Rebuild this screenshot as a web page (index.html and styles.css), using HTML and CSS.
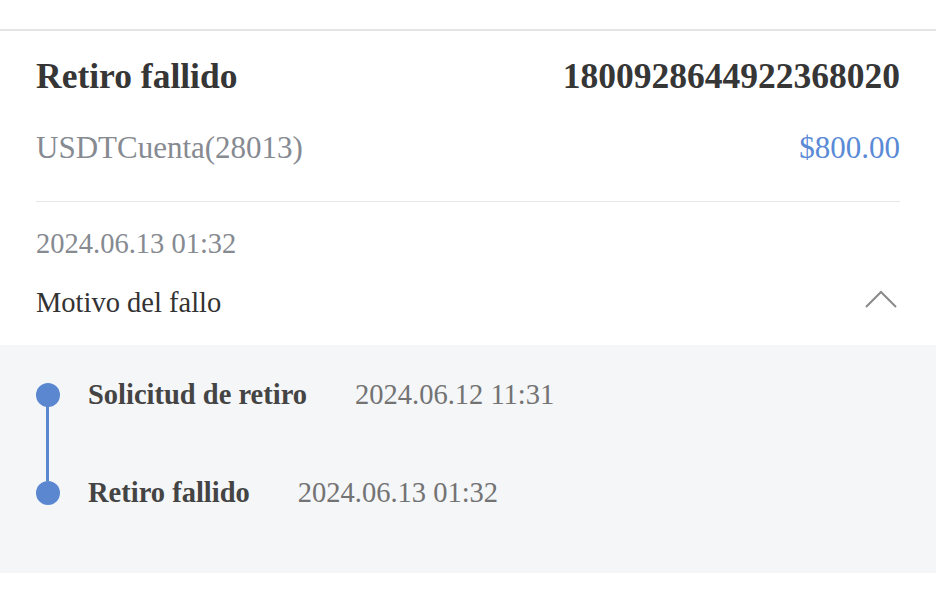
FILE: index.html
```html
<!DOCTYPE html>
<html lang="es">
<head>
    <meta charset="UTF-8">
    <meta name="viewport" content="width=device-width, initial-scale=1.0">
    <title>Retiro fallido</title>
    <link rel="stylesheet" href="styles.css">
</head>
<body>
    <div class="topbar"></div>

    <div class="order">
        <div class="order-head">
            <div class="row title-row">
                <span class="status">Retiro fallido</span>
                <span class="order-no">1800928644922368020</span>
            </div>
            <div class="row account-row">
                <span class="account">USDTCuenta(28013)</span>
                <span class="amount">$800.00</span>
            </div>
        </div>

        <div class="order-body">
            <div class="date">2024.06.13 01:32</div>
            <div class="row reason-row">
                <span class="reason">Motivo del fallo</span>
                <svg class="chevron" width="32" height="18" viewBox="0 0 32 18">
                    <polyline points="1,17 16,2 31,17" fill="none" stroke="#8a8a8a" stroke-width="2"/>
                </svg>
            </div>
        </div>
    </div>

    <div class="timeline">
        <div class="step">
            <span class="dot"></span>
            <span class="step-name">Solicitud de retiro</span>
            <span class="step-time">2024.06.12 11:31</span>
        </div>
        <div class="step">
            <span class="dot"></span>
            <span class="step-name">Retiro fallido</span>
            <span class="step-time">2024.06.13 01:32</span>
        </div>
    </div>
</body>
</html>
```

FILE: styles.css
```css
body {
    font-family: "Liberation Serif", "Times New Roman", serif;
    margin: 0;
    padding: 0;
    background-color: #fff;
    color: #333;
}
.topbar {
    height: 29px;
    border-bottom: 2px solid #e4e4e4;
}
.order {
    padding: 0 36px;
}
.row {
    display: flex;
    justify-content: space-between;
    align-items: center;
}
.order-head {
    padding: 25px 0 33px;
    border-bottom: 1px solid #e6e6e6;
}
.title-row {
    line-height: 40px;
    font-size: 35.5px;
    font-weight: bold;
    color: #363636;
}
.account-row {
    margin-top: 32px;
    line-height: 40px;
    font-size: 31px;
}
.account {
    color: #868a91;
}
.amount {
    color: #5a8ad6;
}
.order-body {
    padding: 22px 0 22px;
}
.date {
    font-size: 28.5px;
    line-height: 40px;
    color: #868a91;
}
.reason-row {
    margin-top: 19px;
    font-size: 28.5px;
    line-height: 40px;
    color: #333;
}
.chevron {
    margin-right: 3px;
    margin-top: -8px;
}
.timeline {
    background-color: #f5f6f8;
    padding: 30px 36px 60px;
}
.step {
    position: relative;
    display: flex;
    align-items: center;
    line-height: 40px;
    font-size: 28.5px;
}
.step + .step {
    margin-top: 58px;
}
.dot {
    width: 24px;
    height: 24px;
    border-radius: 50%;
    background-color: #5a87d0;
    flex-shrink: 0;
}
.step:not(:last-child) .dot::after {
    content: "";
    position: absolute;
    left: 10px;
    top: 30px;
    width: 3px;
    height: 76px;
    background-color: #5a87d0;
}
.step-name {
    margin-left: 28px;
    font-weight: bold;
    color: #444;
}
.step-time {
    margin-left: 48px;
    color: #737373;
}
```
